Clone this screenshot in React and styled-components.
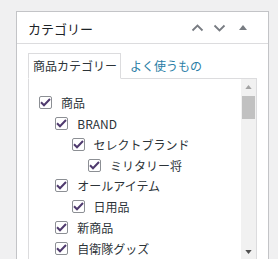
import styled, { createGlobalStyle } from "styled-components"

const GlobalStyle = createGlobalStyle`
    html, body {
        margin: 0;
        padding: 0;
        background: #f0f0f1;
        overflow: hidden;
    }
    body {
        font-family: "Noto Sans CJK JP", "Noto Sans", sans-serif;
        color: #2c3338;
    }
`

const Page = styled.div`
    padding: 11px 0 0 16px;
`

const Panel = styled.div`
    width: 251px;
    background: #fff;
    border: 1px solid #c3c4c7;
    border-bottom: none;
`

const PanelHeader = styled.div`
    display: flex;
    align-items: center;
    height: 31px;
    padding: 0 12px 0 11px;
    border-bottom: 1px solid #dcdcde;
`

const Title = styled.h2`
    flex: 1;
    margin: 0;
    font-size: 13px;
    font-weight: 400;
    color: #1d2327;
    line-height: 1;
    padding-top: 1px;
`

const HeaderButtons = styled.div`
    display: flex;
    align-items: center;
`

const IconButton = styled.span`
    display: flex;
    align-items: center;
    justify-content: center;
    width: ${p => p.$w}px;
    height: 20px;
    color: #787c82;
`

const PanelBody = styled.div`
    padding: 9px 11px 0 11px;
`

const Tabs = styled.div`
    display: flex;
    align-items: flex-end;
    position: relative;
    z-index: 1;
`

const Tab = styled.div`
    height: 24px;
    line-height: 24px;
    font-size: 12px;
    padding: ${p => p.$active ? "0 3px 0 4px" : "0 0 0 8px"};
    background: ${p => p.$active ? "#fff" : "transparent"};
    border: 1px solid ${p => p.$active ? "#dcdcde" : "transparent"};
    border-bottom: 1px solid ${p => p.$active ? "#fff" : "transparent"};
    margin-bottom: -1px;
    color: ${p => p.$active ? "#2c3338" : "#2a7ea6"};
`

const ListBox = styled.div`
    display: flex;
    height: 180px;
    border: 1px solid #dcdcde;
    background: #fff;
`

const CategoryList = styled.ul`
    flex: 1;
    list-style: none;
    margin: 0;
    padding: 13px 0 0 10px;
`

const Row = styled.li`
    display: flex;
    align-items: center;
    height: 20.86px;
    padding-left: ${p => p.$level * 16.3}px;
    font-size: 12px;
    color: #2c3338;
    white-space: nowrap;
`

const Check = styled.span`
    display: flex;
    align-items: center;
    justify-content: center;
    box-sizing: border-box;
    width: 13px;
    height: 13px;
    border: 1px solid #8c8f94;
    border-radius: 2px;
    background: #fff;
    margin-right: 9px;
    flex-shrink: 0;
`

const Scrollbar = styled.div`
    width: 15px;
    background: #f1f1f1;
    display: flex;
    flex-direction: column;
    align-items: center;
`

const ArrowBox = styled.div`
    height: 15px;
    width: 15px;
    display: flex;
    align-items: center;
    justify-content: center;
`

const Thumb = styled.div`
    width: 13px;
    height: 23px;
    margin: 2px 1px 0 0;
    background: #c1c1c1;
`

const Spacer = styled.div`
    flex: 1;
`

const Chevron = ({ down }) => (
    <svg width="13" height="8" viewBox="0 0 13 8">
        <path
            d={down ? "M1.5 1.5 L6.5 6.5 L11.5 1.5" : "M1.5 6.5 L6.5 1.5 L11.5 6.5"}
            fill="none"
            stroke="currentColor"
            strokeWidth="1.8"
        />
    </svg>
)

const Triangle = ({ down, color, w = 8, h = 5 }) => (
    <svg width={w} height={h} viewBox="0 0 8 5">
        <path d={down ? "M0 0 L8 0 L4 5 Z" : "M0 5 L8 5 L4 0 Z"} fill={color} />
    </svg>
)

const Tick = () => (
    <svg width="11" height="9" viewBox="0 0 11 9">
        <path d="M1 4.2 L4 7.2 L10 1" fill="none" stroke="#4f3a6e" strokeWidth="2" />
    </svg>
)

const categories = [
    { name: "商品", level: 0 },
    { name: "BRAND", level: 1 },
    { name: "セレクトブランド", level: 2 },
    { name: "ミリタリー将", level: 3 },
    { name: "オールアイテム", level: 1 },
    { name: "日用品", level: 2 },
    { name: "新商品", level: 1 },
    { name: "自衛隊グッズ", level: 1 },
]

const App = () => {
    return (
        <Page>
            <GlobalStyle />
            <Panel>
                <PanelHeader>
                    <Title>カテゴリー</Title>
                    <HeaderButtons>
                        <IconButton $w={22}><Chevron /></IconButton>
                        <IconButton $w={22}><Chevron down /></IconButton>
                        <IconButton $w={26}><Triangle color="#787c82" /></IconButton>
                    </HeaderButtons>
                </PanelHeader>
                <PanelBody>
                    <Tabs>
                        <Tab $active>商品カテゴリー</Tab>
                        <Tab>よく使うもの</Tab>
                    </Tabs>
                    <ListBox>
                        <CategoryList>
                            {categories.map(c => (
                                <Row key={c.name} $level={c.level}>
                                    <Check><Tick /></Check>
                                    {c.name}
                                </Row>
                            ))}
                        </CategoryList>
                        <Scrollbar>
                            <ArrowBox><Triangle color="#a3a3a3" w={7} h={4} /></ArrowBox>
                            <Thumb />
                            <Spacer />
                            <ArrowBox><Triangle down color="#505050" w={7} h={4} /></ArrowBox>
                        </Scrollbar>
                    </ListBox>
                </PanelBody>
            </Panel>
        </Page>
    )
}

export default App
